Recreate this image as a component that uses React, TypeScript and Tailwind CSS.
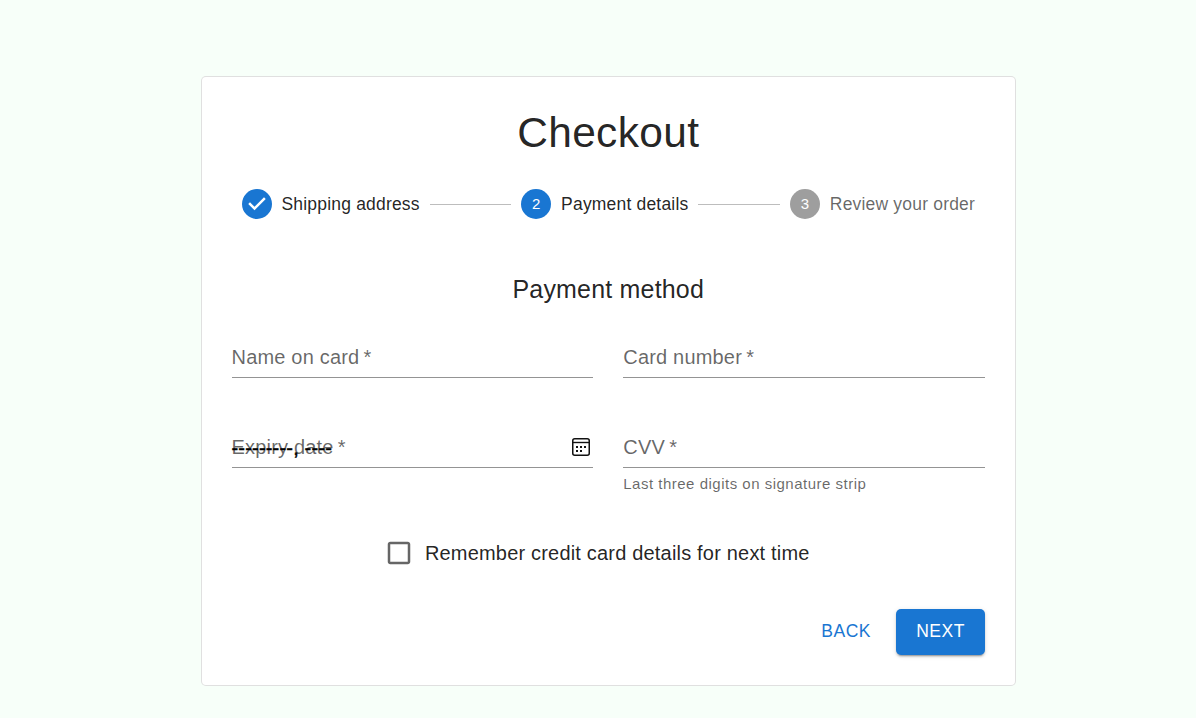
import type { ReactNode } from 'react';

function Check() {
  return (
    <svg viewBox="0 0 24 24" className="size-[30px] shrink-0" fill="#1976d2">
      <path d="M12 0a12 12 0 1 0 0 24 12 12 0 0 0 0-24zm-2 17l-5-5 1.4-1.4 3.6 3.6 7.6-7.6L19 8l-9 9z" />
    </svg>
  );
}

function StepNumber({ n, active }: { n: number; active: boolean }) {
  return (
    <span
      className={`flex size-[30px] shrink-0 items-center justify-center rounded-full text-[15px] leading-none text-white ${
        active ? 'bg-[#1976d2]' : 'bg-[#9e9e9e]'
      }`}
    >
      {n}
    </span>
  );
}

function Step({ icon, label, muted = false }: { icon: ReactNode; label: string; muted?: boolean }) {
  return (
    <div className="flex items-center gap-2.5 px-2.5">
      {icon}
      <span
        className={`whitespace-nowrap pt-px text-[17.5px] leading-[25px] tracking-[0.01071em] ${
          muted ? 'text-black/60' : 'text-black/87'
        }`}
      >
        {label}
      </span>
    </div>
  );
}

function Field({ label, helper, children }: { label: string; helper?: string; children?: ReactNode }) {
  return (
    <div className="h-[90px]">
      <div className="flex h-[40px] items-start justify-between border-b border-[#949494]">
        <div className="grid text-[20px] leading-[29px] tracking-[0.00938em]">
          {children}
          <span className="col-start-1 row-start-1 pt-[5px] text-black/60">{label}&#8201;*</span>
        </div>
        {children && <CalendarIcon />}
      </div>
      {helper && (
        <p className="mt-[3px] text-[15px] leading-[25px] tracking-[0.03333em] text-black/60">{helper}</p>
      )}
    </div>
  );
}

function CalendarIcon() {
  return (
    <svg viewBox="0 0 18 18" className="mt-[10px] mr-[3px] size-[18px]" fill="none" stroke="#111">
      <rect x="0.75" y="0.75" width="16.5" height="16.5" rx="2" strokeWidth="1.5" />
      <path d="M1 4.5h16" strokeWidth="1.4" />
      <path d="M4 9h2M8 9h2M12 9h2M4 13h2M8 13h2" strokeWidth="2" />
    </svg>
  );
}

export default function App() {
  return (
    <main className="flex h-[718px] justify-center bg-[#f7fff9] pt-[76px] pl-[21px] font-['Liberation_Sans',Arial,sans-serif]">
      <section className="flex h-[610px] w-[815px] flex-col rounded-[5px] border border-black/12 bg-white pt-[30px] pr-[30px] pl-[29.5px]">
        <h1 className="text-center text-[42.5px] leading-[52.5px] tracking-[0.00735em] text-black/87">Checkout</h1>
        <div className="mt-[29px] flex h-[30px] items-center">
          <Step icon={<Check />} label="Shipping address" />
          <span className="mt-px h-px flex-1 bg-[#bdbdbd]" />
          <Step icon={<StepNumber n={2} active />} label="Payment details" />
          <span className="mt-px h-px flex-1 bg-[#bdbdbd]" />
          <Step icon={<StepNumber n={3} active={false} />} label="Review your order" muted />
        </div>
        <h2 className="mt-[50px] text-center text-[25px] leading-10 tracking-[0.0075em] text-black/87">
          Payment method
        </h2>
        <div className="mt-[29px] grid grid-cols-2 gap-x-[30px]">
          <Field label="Name on card" />
          <Field label="Card number" />
          <Field label="Expiry date">
            <span className="col-start-1 row-start-1 pt-[6px] text-black [-webkit-text-stroke:0.5px_black]">
              ---------, ----
            </span>
          </Field>
          <Field label="CVV" helper="Last three digits on signature strip" />
        </div>
        <label className="mt-[20px] flex items-center justify-center pr-[23px] text-[20px] leading-[30px] tracking-[0.00938em] text-black/87">
          <svg viewBox="0 0 24 24" className="mr-[11px] size-[30px]" fill="#666">
            <path d="M19 5v14H5V5h14m0-2H5c-1.1 0-2 .9-2 2v14c0 1.1.9 2 2 2h14c1.1 0 2-.9 2-2V5c0-1.1-.9-2-2-2z" />
          </svg>
          Remember credit card details for next time
        </label>
        <div className="mt-[41px] flex justify-end text-[17.5px] leading-[30px] tracking-[0.02857em]">
          <button className="px-[25px] pb-[2px] text-[#1976d2]">BACK</button>
          <button className="h-[46px] w-[89px] rounded-[5px] bg-[#1976d2] pb-[2px] text-white shadow-[0_3px_1px_-2px_rgba(0,0,0,0.2),0_2px_2px_0_rgba(0,0,0,0.14),0_1px_5px_0_rgba(0,0,0,0.12)]">
            NEXT
          </button>
        </div>
      </section>
    </main>
  );
}
